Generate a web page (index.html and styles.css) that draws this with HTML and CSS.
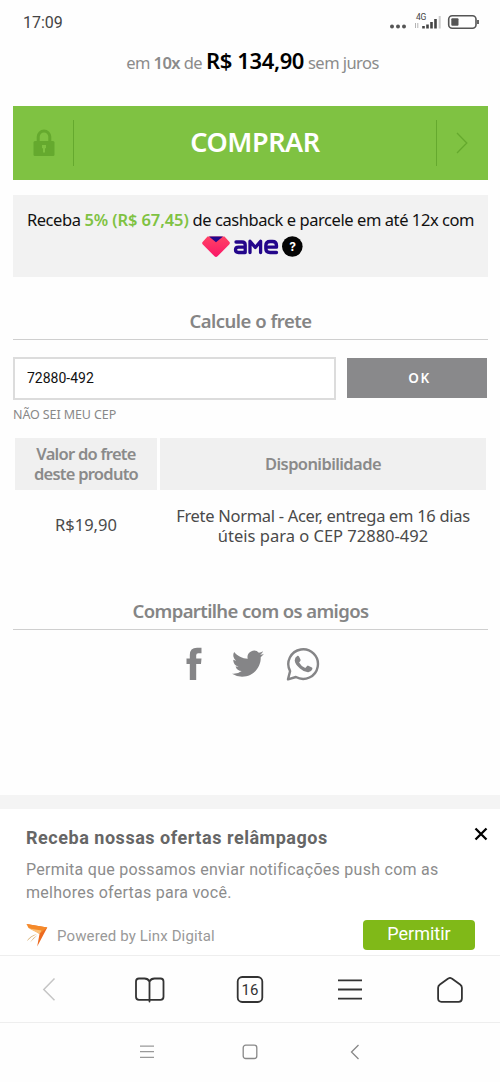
FILE: index.html
```html
<!DOCTYPE html>
<html lang="pt-BR">
<head>
<meta charset="utf-8">
<title>Comprar</title>
<link rel="stylesheet" href="styles.css">
</head>
<body>
<header class="status">
  <span class="clock">17:09</span>
  <svg class="status-icons" width="92" height="24" viewBox="0 0 92 24">
    <g fill="#555"><circle cx="4" cy="15.400" r="2"/><circle cx="10" cy="15.400" r="2"/><circle cx="16" cy="15.400" r="2"/></g>
    <text class="net" x="28" y="9">4G</text>
    <path d="M27.500 12v5M29.800 12v5" stroke="#aaa" stroke-width=".9"/>
    <path d="M35.500 15v2.500M39.500 13.500v4M43.500 11v6.500M47.500 8v9.500" stroke="#444" stroke-width="2.600"/>
    <path d="M51.700 5v12.500" stroke="#ccc" stroke-width="2"/>
    <rect x="60.700" y="4.700" width="27.300" height="12.600" rx="3.500" fill="none" stroke="#555" stroke-width="1.600"/>
    <rect x="63.300" y="7.300" width="7.200" height="7.400" rx="1" fill="#555"/>
    <path d="M90 9v4" stroke="#555" stroke-width="1.800"/>
  </svg>
</header>
<main class="product">
  <p class="price"><span class="em">em <b>10x</b> de</span><strong>R$ 134,90</strong><span class="juros">sem juros</span></p>
  <button class="buy">
    <span class="buy-side left"><svg width="22" height="28" viewBox="0 0 22 28"><path d="M5.200 13V7.800a5.800 5.800 0 0 1 11.600 0V13" fill="none" stroke="#65a92e" stroke-width="3"/><rect x=".5" y="12" width="21" height="15" rx="1.500" fill="#65a92e"/><path d="M9 16h4v3.200h-1v4.300h-2v-4.300H9z" fill="#7fc242"/></svg></span>
    <span class="buy-label">COMPRAR</span>
    <span class="buy-side right"><svg width="12" height="22" viewBox="0 0 12 22"><path d="M1 1l9.800 10L1 21" fill="none" stroke="#65a92e" stroke-width="1.300"/></svg></span>
  </button>
  <section class="cashback">
    <p class="cash-text">Receba <b>5% (R$ 67,45)</b> de cashback e parcele em até 12x com</p>
    <svg class="ame" width="102" height="24" viewBox="0 0 102 24">
      <defs><linearGradient id="heart" x1="0" y1="0" x2="0" y2="1"><stop offset="0" stop-color="#ff4265"/><stop offset="1" stop-color="#fa1768"/></linearGradient></defs>
      <path d="M5.500 1.500h17L27.500 7q.8 1.200-.3 2.400L15.500 21.300q-1.500 1.400-3 0L.8 9.400Q-.4 8.200.6 7z" fill="url(#heart)"/>
      <path d="M7 1.500h14l-7 5.800z" fill="#23068b"/>
      <g fill="none" stroke="#23068b" stroke-width="3.300" stroke-linecap="round" stroke-linejoin="round">
        <path d="M34 7h6q3.200 0 3.200 3v7.500h-6.700q-3 0-3-2.700t3-2.700h6.700"/>
        <path d="M48 17.500V6.200l5.300 6.300 5.300-6.300v11.300"/>
        <path d="M74.500 17.500H68q-4.200 0-4.200-4v-3q0-4 4.200-4h2.500q4 0 4 4v1.700H64"/>
      </g>
      <circle cx="90.300" cy="11.500" r="10.300" fill="#050505"/>
      <text class="help" x="90.500" y="16">?</text>
    </svg>
  </section>
  <h2 class="title shipping">Calcule o frete</h2>
  <div class="cep-row">
    <input class="cep" value="72880-492">
    <button class="ok">OK</button>
  </div>
  <a class="unknown">NÃO SEI MEU CEP</a>
  <div class="freight">
    <div class="th product-cost">Valor do frete<br>deste produto</div>
    <div class="th availability">Disponibilidade</div>
    <div class="td cost">R$19,90</div>
    <div class="td delivery"><span class="wide">Frete Normal - Acer, entrega em 16 dias</span><br>úteis para o CEP 72880-492</div>
  </div>
  <h2 class="title share">Compartilhe com os amigos</h2>
  <div class="social">
    <svg width="16" height="34" viewBox="0 0 16 34"><path d="M15.500.8v5.500h-3.300q-2 0-2 2v3.200h5.300l-.5 5.500h-4.800v16H3.800V17H.5v-5.500h3.300V8Q3.800.8 11 .8z" fill="#858587"/></svg>
    <svg width="32" height="34" viewBox="0 0 24 25.500"><path d="M23.950 5.070a10 10 0 0 1-2.820.770 4.960 4.960 0 0 0 2.160-2.720c-.95.550-2 .950-3.130 1.180a4.920 4.920 0 0 0-8.380 4.480C7.690 8.600 4.070 6.630 1.640 3.660a4.930 4.930 0 0 0 1.520 6.570 4.900 4.900 0 0 1-2.230-.61v.06a4.920 4.920 0 0 0 3.950 4.830 5 5 0 0 1-2.210.080 4.940 4.940 0 0 0 4.600 3.420A9.870 9.870 0 0 1 0 20.050a14 14 0 0 0 7.550 2.210c9.050 0 14-7.500 14-13.980 0-.21 0-.42-.020-.63a9.900 9.900 0 0 0 2.420-2.580z" fill="#858587"/></svg>
    <svg class="whatsapp" width="34" height="34" viewBox="0 0 34 34"><path d="M2 32.300l2.100-8.200a14.800 14.800 0 1 1 5.800 5.900z" fill="none" stroke="#858587" stroke-width="2.400" stroke-linejoin="round"/><path d="M11.500 8.800q.9-.3 1.500.6l1.600 3.300q.2.800-.5 1.500l-1 1.200q2.200 4 6.200 5.600l1.800-2q.5-.6 1.200-.3l3.600 1.800q.8.400.4 1.700-1 2.700-4 3-4.100.2-8.300-3.700-4.900-4.300-5.300-8.100-.1-3 2.800-4.600z" fill="#858587"/></svg>
  </div>
</main>
<div class="band"></div>
<section class="push">
  <svg class="close" width="14" height="14" viewBox="0 0 14 14"><path d="M1.500 1.500l11 11m0-11l-11 11" stroke="#000" stroke-width="2.300"/></svg>
  <h3>Receba nossas ofertas relâmpagos</h3>
  <p class="push-text">Permita que possamos enviar notificações push com as<br>melhores ofertas para você.</p>
  <div class="push-foot">
    <svg width="22" height="24" viewBox="0 0 22 24"><path d="M.5 1L21.300 4.400 11.200 23.500 13.500 11z" fill="#ec6a20"/><path d="M.5 1L21.300 4.400 14 10.500 2.500 5z" fill="#f58a2a"/><path d="M3 5.500L15.500 7.500 13.500 11z" fill="#fbc078"/><path d="M1 18q3-5.500 10-7-5 2-10 7zM4 19.500q2.500-4.800 7.500-7.500-3.500 3.500-7.500 7.500z" fill="#d7ad70"/></svg>
    <span class="powered">Powered by Linx Digital</span>
    <button class="allow">Permitir</button>
  </div>
</section>
<nav class="browser">
  <svg viewBox="0 0 34 34"><path d="M21.500 6.500L10.800 17.500l10.700 10.700" fill="none" stroke="#c5c5c5" stroke-width="1.500"/></svg>
  <svg viewBox="0 0 34 34"><path d="M16.500 9.500Q15 6.500 11.500 6.500H6q-3 0-3 3v15.300q0 3 3 3h21.500q3 0 3-3V9.500q0-3-3-3h-6q-3.500 0-5 3v20" fill="none" stroke="#333" stroke-width="1.800" stroke-linecap="round"/></svg>
  <svg viewBox="0 0 34 34"><rect x="4.700" y="5" width="24.600" height="25" rx="4.500" fill="none" stroke="#333" stroke-width="1.800"/><text class="tabs" x="17" y="23">16</text></svg>
  <svg viewBox="0 0 34 34"><path d="M5 8.300h24M5 17.500h24M5 26.700h24" stroke="#333" stroke-width="1.800"/></svg>
  <svg viewBox="0 0 34 34"><path d="M15.200 6.600q1.800-1.400 3.600 0l8.300 5.900q1.800 1.300 1.800 3.300v10.700q0 3.300-3.300 3.300H8.400q-3.300 0-3.300-3.300V15.800q0-2 1.800-3.300z" fill="none" stroke="#333" stroke-width="1.800"/></svg>
</nav>
<nav class="system">
  <svg viewBox="0 0 20 20"><path d="M3 4.200h14M3 9.700h14M3 15.300h14" stroke="#999" stroke-width="1.200"/></svg>
  <svg viewBox="0 0 20 20"><rect x="3.200" y="3.200" width="13.600" height="13.300" rx="2.500" fill="none" stroke="#888" stroke-width="1.300"/></svg>
  <svg viewBox="0 0 20 20"><path d="M13.500 3L6.500 10l7 7" fill="none" stroke="#888" stroke-width="1.300"/></svg>
</nav>
</body>
</html>
```
FILE: styles.css
```css
* { box-sizing: border-box; }
body { margin: 0; width: 500px; height: 1082px; overflow: hidden; background: #fefefe; font-family: "Noto Sans", sans-serif; display: flex; flex-direction: column; }
p, h2, h3 { margin: 0; }
button { border: 0; padding: 0; font-family: inherit; }
svg { display: block; flex: none; }
p, h2, h3, span, .th, .td, .unknown { white-space: nowrap; }
.status { height: 45px; flex: none; display: flex; justify-content: space-between; padding: 11px 20px 0 23px; }
.clock { font: 16px/24px Roboto, sans-serif; color: #444; }
.net { font: 8.500px Roboto, sans-serif; fill: #444; letter-spacing: -.4px; }
.product { height: 750px; flex: none; padding: 0 12px 0 13px; }
.price { height: 61px; display: flex; justify-content: center; align-items: baseline; gap: 4px; line-height: 30px; font-size: 16.500px; letter-spacing: -.55px; color: #8b8b8b; padding-left: 4px; }
.price b { font-weight: 600; }
.price strong { font-size: 22px; font-weight: 600; color: #000; letter-spacing: -.4px; }
.buy { width: 475px; height: 74px; display: flex; align-items: center; background: #7fc242; color: #fff; }
.buy-side { height: 46px; display: flex; align-items: center; flex: none; }
.left { width: 61px; padding-left: 20px; border-right: 1px solid #65a92e; }
.right { width: 52px; padding-left: 19px; border-left: 1px solid #65a92e; }
.buy-label { flex: 1; font-size: 27px; font-weight: 600; line-height: 44px; padding-bottom: 2px; letter-spacing: -.4px; }
.cashback { height: 82px; margin-top: 15px; background: #f2f2f2; display: flex; flex-direction: column; align-items: center; padding-top: 12px; }
.cash-text { font-size: 16.500px; line-height: 26px; color: #111; letter-spacing: -.43px; }
.cash-text b { color: #7fc242; font-weight: 600; letter-spacing: -.1px; }
.ame { margin: 2px 0 0 5px; }
.help { font: bold 12px Inter, sans-serif; fill: #fff; text-anchor: middle; }
.title { font-size: 18.500px; font-weight: 600; color: #858585; text-align: center; line-height: 28px; height: 33px; border-bottom: 1px solid #cfcfcf; letter-spacing: -.5px; }
.shipping { margin-top: 30px; }
.cep-row { display: flex; align-items: flex-start; gap: 11px; margin-top: 17px; }
.cep { width: 323px; height: 43px; border: 2px solid #dcdcdc; padding: 0 12px 2px; background: #fff; font: 14px Roboto, sans-serif; color: #111; }
.ok { width: 140px; height: 40px; margin-top: 1px; background: #89898b; color: #fff; font-size: 13.500px; font-weight: 600; letter-spacing: 1.500px; padding-left: 5px; }
.unknown { display: block; font-size: 12.500px; line-height: 18px; margin-top: 6px; color: #888; letter-spacing: -.1px; }
.freight { display: grid; grid-template-columns: 142px 326px; grid-template-rows: 52px 70px; column-gap: 3px; margin: 14px 0 0 2px; text-align: center; font-size: 16.500px; line-height: 20px; }
.th { background: #f0f0f0; color: #8a8a8a; font-weight: 600; letter-spacing: -.75px; }
.td { color: #4a4a4a; }
.product-cost { padding-top: 6px; }
.availability { padding-top: 16px; letter-spacing: -.6px; }
.cost { padding-top: 25px; }
.delivery { padding-top: 16px; }
.wide { letter-spacing: -.3px; }
.share { margin-top: 37px; letter-spacing: -.62px; }
.social { display: flex; align-items: center; gap: 30px; padding-left: 173px; margin-top: 17px; }
.whatsapp { margin-left: -8px; }
.band { height: 14px; flex: none; background: #f4f4f4; }
.push { height: 146px; flex: none; position: relative; padding: 16px 25px 0 26px; background: #fff; font-family: Roboto, sans-serif; }
.close { position: absolute; right: 12px; top: 18px; }
.push h3 { font-size: 18px; font-weight: 700; line-height: 25px; color: #666; letter-spacing: .53px; }
.push-text { margin-top: 8px; font-size: 16px; line-height: 23px; color: #8c8c8c; letter-spacing: .26px; }
.push-foot { display: flex; align-items: center; margin-top: 16px; height: 30px; }
.powered { margin-left: 9px; padding-top: 1px; font-size: 15px; color: #999; letter-spacing: .13px; }
.allow { margin-left: auto; width: 112px; height: 30px; border-radius: 4px; background: #80b918; color: #fff; font-size: 18px; line-height: 27px; padding-bottom: 3px; }
.browser { height: 67px; flex: none; border-top: 1px solid #eee; display: grid; grid-template-columns: repeat(5, 100px); place-items: center; padding-bottom: 1px; }
.browser svg { width: 34px; height: 34px; }
.tabs { font: 15px Roboto, sans-serif; fill: #333; text-anchor: middle; }
.system { height: 60px; flex: none; border-top: 1px solid #eee; display: flex; padding: 19px 0 0 137px; gap: 83px; }
.system svg { width: 20px; height: 20px; }
.system svg + svg + svg { margin-left: 2px; }
```
